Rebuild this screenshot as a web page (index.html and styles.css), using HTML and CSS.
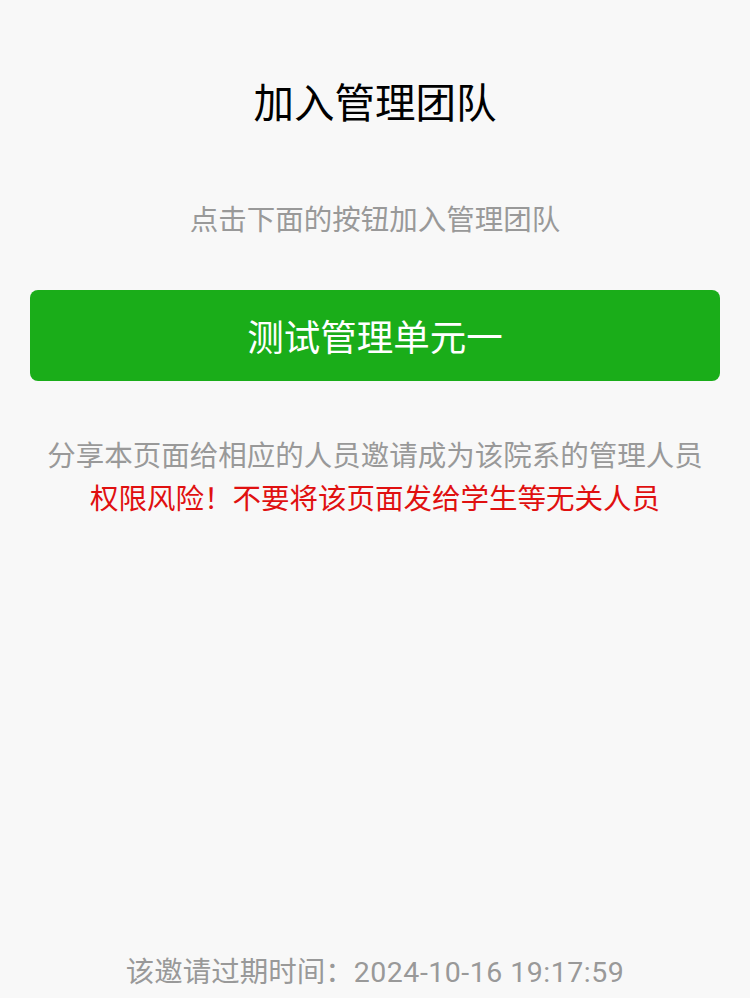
FILE: index.html
```html
<!DOCTYPE html>
<html>
<head>
    <meta charset="UTF-8">
    <meta name="viewport" content="width=device-width, initial-scale=1.0">
    <title>加入管理团队</title>
    <link rel="stylesheet" href="styles.css">
</head>
<body>
    <div class="page">
        <div class="title">加入管理团队</div>
        <div class="subtitle">点击下面的按钮加入管理团队</div>
        <button class="join-button">测试管理单元一</button>
        <div class="tips">
            <div class="tip-gray">分享本页面给相应的人员邀请成为该院系的管理人员</div>
            <div class="tip-red">权限风险！不要将该页面发给学生等无关人员</div>
        </div>
        <div class="footer">该邀请过期时间：<span class="time">2024-10-16 19:17:59</span></div>
    </div>
</body>
</html>
```

FILE: styles.css
```css
html, body {
    margin: 0;
    padding: 0;
}
body {
    font-family: "Noto Sans CJK SC", "Noto Sans", sans-serif;
    background-color: #f8f8f8;
    text-align: center;
}
.page {
    display: flex;
    flex-direction: column;
    align-items: center;
    min-height: 998px;
    box-sizing: border-box;
    padding: 73px 30px 5px;
}
.title {
    font-size: 40.5px;
    line-height: 56px;
    color: #000;
}
.subtitle {
    margin-top: 69px;
    font-size: 28.5px;
    line-height: 40px;
    color: #999;
}
.join-button {
    margin-top: 52px;
    width: 100%;
    height: 91px;
    border: none;
    border-radius: 8px;
    background-color: #1aad19;
    color: #fff;
    font-family: inherit;
    font-size: 36.5px;
    cursor: pointer;
}
.tips {
    margin-top: 51px;
    font-size: 28.5px;
    line-height: 43px;
}
.tip-gray {
    color: #999;
}
.tip-red {
    color: #e01010;
}
.footer {
    margin-top: auto;
    font-size: 28.5px;
    line-height: 40px;
    color: #999;
}
.footer .time {
    font-family: Roboto, "Noto Sans CJK SC", sans-serif;
    letter-spacing: 0.5px;
}
```
